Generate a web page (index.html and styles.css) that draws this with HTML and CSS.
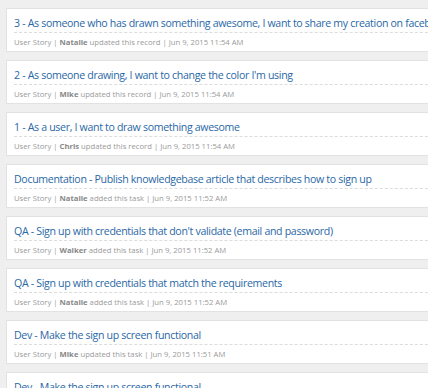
FILE: index.html
```html
<!DOCTYPE html>
<html lang="en">
  <head>
    <meta charset="UTF-8" />
    <meta name="viewport" content="width=device-width, initial-scale=1.0" />
    <title>activity feed</title>
    <link rel="stylesheet" href="styles.css">
  </head>
  <body>
    <div id="feed">
      <div class="item">
        <a class="title" href="#">3 - As someone who has drawn something awesome, I want to share my creation on facebook</a>
        <p class="meta">User Story | <b>Natalie</b> updated this record | Jun 9, 2015 11:54 AM</p>
      </div>
      <div class="item">
        <a class="title" href="#">2 - As someone drawing, I want to change the color I'm using</a>
        <p class="meta">User Story | <b>Mike</b> updated this record | Jun 9, 2015 11:54 AM</p>
      </div>
      <div class="item">
        <a class="title" href="#">1 - As a user, I want to draw something awesome</a>
        <p class="meta">User Story | <b>Chris</b> updated this record | Jun 9, 2015 11:54 AM</p>
      </div>
      <div class="item">
        <a class="title" href="#">Documentation - Publish knowledgebase article that describes how to sign up</a>
        <p class="meta">User Story | <b>Natalie</b> added this task | Jun 9, 2015 11:52 AM</p>
      </div>
      <div class="item">
        <a class="title" href="#">QA - Sign up with credentials that don't validate (email and password)</a>
        <p class="meta">User Story | <b>Walker</b> added this task | Jun 9, 2015 11:52 AM</p>
      </div>
      <div class="item">
        <a class="title" href="#">QA - Sign up with credentials that match the requirements</a>
        <p class="meta">User Story | <b>Natalie</b> added this task | Jun 9, 2015 11:52 AM</p>
      </div>
      <div class="item">
        <a class="title" href="#">Dev - Make the sign up screen functional</a>
        <p class="meta">User Story | <b>Mike</b> updated this task | Jun 9, 2015 11:51 AM</p>
      </div>
      <div class="item">
        <a class="title" href="#">Dev - Make the sign up screen functional</a>
        <p class="meta">User Story | <b>Mike</b> added this task | Jun 9, 2015 11:51 AM</p>
      </div>
    </div>
  </body>
</html>
```

FILE: styles.css
```css
body {
  margin: 0;
  padding: 8px 0 0 6px;
  background: #efefef;
  overflow: hidden;
  font-family: "Open Sans", "Liberation Sans", sans-serif;
}
#feed {
  display: flex;
  flex-direction: column;
  gap: 8px;
  width: 480px;
}
.item {
  background: #fff;
  border: 1px solid #e2e2e2;
  padding: 5px 7px 3px;
}
.title {
  display: block;
  font-size: 10.6px;
  letter-spacing: -0.33px;
  line-height: 18px;
  color: #2a68a6;
  text-decoration: none;
  white-space: nowrap;
  border-bottom: 1px dashed #dcdcdc;
}
.meta {
  margin: 3px 0 0;
  font-size: 7.7px;
  line-height: 12px;
  color: #9a9a9a;
}
.meta b {
  color: #888;
}
```
